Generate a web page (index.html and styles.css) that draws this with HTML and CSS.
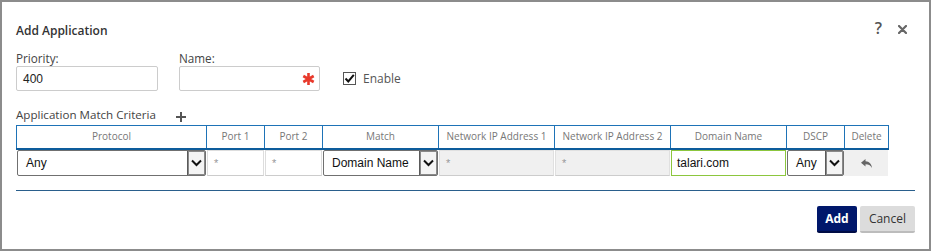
FILE: index.html
```html
<!DOCTYPE html>
<html lang="en">
<head>
    <meta charset="UTF-8">
    <title>Add Application</title>
    <link rel="stylesheet" href="styles.css">
</head>
<body>

<div class="dialog">
    <div class="dialog-head">
        <h2>Add Application</h2>
        <div class="head-tools">
            <span class="help">?</span>
            <svg class="close" width="9" height="9" viewBox="0 0 9 9"><path d="M1 1L8 8M8 1L1 8" stroke="#666" stroke-width="2.2" stroke-linecap="round"/></svg>
        </div>
    </div>

    <div class="fields">
        <div class="field">
            <label>Priority:</label>
            <div class="text-box priority">400</div>
        </div>
        <div class="field">
            <label>Name:</label>
            <div class="text-box name">
                <svg class="required" width="13" height="14" viewBox="0 0 13 14">
                    <path d="M6.5 1V13M1.3 4L11.7 10M11.7 4L1.3 10" stroke="#e8392b" stroke-width="2.6"/>
                </svg>
            </div>
        </div>
        <div class="enable">
            <span class="check">
                <svg width="11" height="11" viewBox="0 0 11 11"><path d="M1.5 5.5L4.3 8.5L9.8 1.8" fill="none" stroke="#111" stroke-width="2"/></svg>
            </span>
            <span>Enable</span>
        </div>
    </div>

    <div class="criteria-title">
        <span>Application Match Criteria</span>
        <svg width="10" height="10" viewBox="0 0 10 10"><path d="M5 0V10M0 5H10" stroke="#555" stroke-width="2"/></svg>
    </div>

    <div class="grid head">
        <div>Protocol</div>
        <div>Port 1</div>
        <div>Port 2</div>
        <div>Match</div>
        <div>Network IP Address 1</div>
        <div>Network IP Address 2</div>
        <div>Domain Name</div>
        <div>DSCP</div>
        <div>Delete</div>
    </div>
    <div class="grid row">
        <div><div class="select">Any<span class="arrow"><svg width="11" height="8" viewBox="0 0 11 8"><path d="M1 1.5L5.5 6L10 1.5" fill="none" stroke="#111" stroke-width="2"/></svg></span></div></div>
        <div><div class="input ph">*</div></div>
        <div><div class="input ph">*</div></div>
        <div><div class="select">Domain Name<span class="arrow"><svg width="11" height="8" viewBox="0 0 11 8"><path d="M1 1.5L5.5 6L10 1.5" fill="none" stroke="#111" stroke-width="2"/></svg></span></div></div>
        <div><div class="input ph disabled">*</div></div>
        <div><div class="input ph disabled">*</div></div>
        <div><div class="input valid">talari.com</div></div>
        <div><div class="select">Any<span class="arrow"><svg width="11" height="8" viewBox="0 0 11 8"><path d="M1 1.5L5.5 6L10 1.5" fill="none" stroke="#111" stroke-width="2"/></svg></span></div></div>
        <div class="delete-cell">
            <svg width="11" height="9" viewBox="0 0 11 9"><path d="M4.5 0L0 3.8L4.5 7.6V5.3C7.5 5.3 9.5 6.3 11 9C10.6 5 8.4 2.4 4.5 2.2Z" fill="#666"/></svg>
        </div>
    </div>

    <div class="divider"></div>

    <div class="actions">
        <button class="btn primary">Add</button>
        <button class="btn">Cancel</button>
    </div>
</div>

</body>
</html>
```

FILE: styles.css
```css
* {
    margin: 0;
    padding: 0;
    box-sizing: border-box;
}

body {
    font-family: 'Open Sans', sans-serif;
    color: #444;
    background: #fff;
}

.dialog {
    width: 931px;
    height: 251px;
    border: 2px solid #8c8c8c;
    padding: 20px 14px 0;
}

.dialog-head {
    display: flex;
    justify-content: space-between;
    align-items: flex-start;
    height: 18px;
}

.dialog-head h2 {
    font-size: 12px;
    font-weight: 600;
    color: #333;
    line-height: 18px;
}

.head-tools {
    display: flex;
    align-items: center;
    gap: 16px;
    margin-right: 8px;
    margin-top: -3px;
}

.help {
    font-size: 16px;
    font-weight: 600;
    color: #555;
    line-height: 18px;
    margin-left: 1px;
}

.close {
    margin-top: 2px;
}

.fields {
    display: flex;
    align-items: flex-end;
    margin-top: 10px;
}

.field {
    display: flex;
    flex-direction: column;
    margin-right: 21px;
}

.field label {
    font-size: 11.7px;
    line-height: 16px;
    color: #444;
}

.text-box {
    height: 25px;
    border: 1px solid #ccc;
    border-radius: 2px;
    font-family: 'Liberation Sans', Arial, sans-serif;
    font-size: 12px;
    color: #222;
    padding: 0 6px;
    display: flex;
    align-items: center;
}

.priority {
    width: 142px;
}

.name {
    width: 141px;
    justify-content: flex-end;
    padding-right: 4px;
}

.enable {
    display: flex;
    align-items: center;
    gap: 7px;
    height: 25px;
    margin-left: 2px;
    font-size: 12px;
    color: #555;
}

.check {
    width: 13px;
    height: 13px;
    border: 1px solid #555;
    display: flex;
    align-items: center;
    justify-content: center;
}

.criteria-title {
    display: flex;
    align-items: center;
    gap: 20px;
    margin-top: 16px;
    font-size: 11.6px;
    line-height: 16px;
    color: #444;
}

.criteria-title svg {
    margin-top: 3px;
}

.grid {
    display: grid;
    grid-template-columns: 190px 58px 58px 116px 116px 116px 116px 58px 45px;
    width: 873px;
}

.grid.head {
    margin-top: 2px;
    height: 25px;
    border-top: 1px solid #1e73b7;
    border-bottom: 2px solid #0d5c9c;
}

.grid.head div {
    border-left: 1px solid #1e73b7;
    font-size: 10px;
    color: #777;
    text-align: center;
    line-height: 21px;
}

.grid.head div:last-child {
    border-right: 1px solid #1e73b7;
}

.grid.row {
    height: 26px;
}

.grid.row > div {
    padding-left: 1px;
}

.input,
.select {
    height: 26px;
    font-family: 'Liberation Sans', Arial, sans-serif;
    font-size: 12px;
    color: #111;
    display: flex;
    align-items: center;
}

.input {
    border: 1px solid #ddd;
    border-bottom-color: #ccc;
    padding: 0 6px;
}

.input.ph {
    color: #999;
    font-size: 11px;
}

.input.disabled {
    background: #f0f0f0;
    border-color: #e0e0e0;
    border-bottom-color: #ccc;
}

.input.valid {
    border-color: #8cc63e;
    padding-left: 5px;
}

.select {
    border: 1px solid #707070;
    border-radius: 2px;
    padding-left: 8px;
    justify-content: space-between;
}

.select .arrow {
    width: 18px;
    height: 100%;
    border-left: 1px solid #5a5a5a;
    box-shadow: inset 0 0 0 1px #8a8a8a;
    background: #f4f4f4;
    display: flex;
    align-items: center;
    justify-content: center;
}

.delete-cell {
    background: #f0f0f0;
    height: 26px;
    display: flex;
    align-items: center;
    justify-content: center;
    margin-right: 1px;
}

.divider {
    margin-top: 14px;
    height: 1px;
    background: #2a5f8c;
}

.actions {
    display: flex;
    justify-content: flex-end;
    gap: 3px;
    margin-top: 15px;
}

.btn {
    height: 27px;
    padding: 0 9px;
    font-family: 'Open Sans', sans-serif;
    font-size: 12px;
    color: #333;
    background: #dcdcdc;
    border: none;
    border-bottom: 2px solid #bcbcbc;
    border-radius: 2px;
}

.btn.primary {
    width: 40px;
    padding: 0;
    background: #00176b;
    border-bottom-color: #000c45;
    color: #fff;
    font-weight: 700;
}
```
